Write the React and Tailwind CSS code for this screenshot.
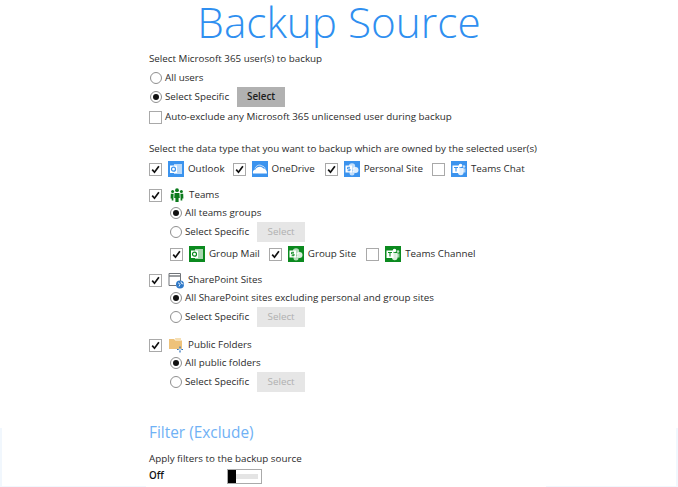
import React from "react";

const Check = ({ checked = true, className = "" }) => (
  <span className={`flex h-[13px] w-[13px] shrink-0 items-center justify-center border border-[#a9a9a9] bg-white ${className}`}>
    {checked && (
      <svg width="9" height="9" viewBox="0 0 9 9" fill="none">
        <path d="M1.2 4.6 3.5 7.2 7.9 1.2" stroke="#111" strokeWidth="1.7" />
      </svg>
    )}
  </span>
);

const Radio = ({ on = false }) => (
  <span className="flex h-3 w-3 shrink-0 items-center justify-center rounded-full border border-[#8f8f8f] bg-white">
    {on && <span className="h-[6px] w-[6px] rounded-full bg-[#111]" />}
  </span>
);

const SelectBtn = ({ active = false }) =>
  active ? (
    <button className="ml-2 flex h-5 w-12 items-center justify-center bg-[#b1b1b1] text-[9.8px] font-semibold text-[#1c1c1c]">Select</button>
  ) : (
    <button className="ml-2 flex h-5 w-12 items-center justify-center bg-[#e6e6e6] text-[9.8px] text-[#b0b0b0]">Select</button>
  );

// square tile with the white product drawing on it
const Tile = ({ color, kind }) => (
  <svg width="16" height="16" viewBox="0 0 16 16" className="shrink-0">
    <rect width="16" height="16" fill={color} />
    {kind === "outlook" && (
      <>
        <rect x="6" y="3" width="8" height="10" fill="#fff" opacity=".65" />
        <rect x="2" y="4.500" width="7" height="7.500" fill="#fff" />
        <circle cx="5.500" cy="8.200" r="2" fill="none" stroke={color} strokeWidth="1.2" />
      </>
    )}
    {kind === "cloud" && (
      <>
        <path d="M3 7.500c1-3 4.500-4.500 7-2.500 1.500.2 2.800 1.200 3.200 2.600" fill="none" stroke="#fff" strokeWidth="1" opacity=".7" />
        <path d="M1 12.500c-.5-2 .5-4 2.500-4 1-2.800 5.500-4 8-1 2 0 3.500 2 3.500 5z" fill="#fff" />
      </>
    )}
    {kind === "site" && (
      <>
        <circle cx="8" cy="5.500" r="3.200" fill="#fff" opacity=".7" />
        <circle cx="11.500" cy="9" r="3" fill="#fff" opacity=".85" />
        <circle cx="8" cy="12" r="2.500" fill="#fff" opacity=".7" />
        <rect x="1.500" y="4.500" width="6.500" height="7" fill="#fff" />
        <path d="M6 6.300H3.600v1.700H6v1.700H3.600" fill="none" stroke={color} strokeWidth="1" />
      </>
    )}
    {kind === "teams" && (
      <>
        <circle cx="9.500" cy="4.500" r="1.800" fill="#fff" />
        <circle cx="13" cy="5.500" r="1.300" fill="#fff" opacity=".75" />
        <path d="M7 7h5.500v4.500a2.700 2.700 0 0 1-5.500 0z" fill="#fff" opacity=".85" />
        <rect x="11.500" y="7.500" width="3" height="4" fill="#fff" opacity=".6" />
        <rect x="1.500" y="4.500" width="7" height="7.500" fill="#fff" />
        <path d="M3 6.500h4M5 6.500v4" stroke={color} strokeWidth="1.1" />
      </>
    )}
  </svg>
);

const TeamsPeople = () => (
  <svg width="14" height="14" viewBox="0 0 14 14" className="shrink-0" fill="#0b7a1c">
    <circle cx="7" cy="2.200" r="1.900" />
    <circle cx="2.600" cy="3.600" r="1.500" />
    <circle cx="11.400" cy="3.600" r="1.500" />
    <path d="M4.600 5h4.800l.4 5H8.600v4H5.400v-4H4.200z" />
    <path d="M.8 5.800h2.800l-.2 4.600v2H1.700v-2H.6zM10.400 5.800h2.800l.2 4.600h-1.100v2h-1.700v-2z" />
  </svg>
);

const SiteIcon = () => (
  <svg width="17" height="17" viewBox="0 0 17 17" className="shrink-0">
    <path d="M12.500 9V1.500H1v12h7" fill="none" stroke="#6f7378" strokeWidth="1" />
    <path d="M1 4h11.500" stroke="#6f7378" strokeWidth="1.400" />
    <circle cx="12" cy="12.500" r="4" fill="#2f79c8" />
    <path d="M10 11c1 0 1.500.5 2 1.500l-1 2M13 9.500l.5 2 2 .5" fill="none" stroke="#fff" strokeWidth=".9" />
  </svg>
);

const FolderIcon = () => (
  <svg width="17" height="16" viewBox="0 0 17 16" className="shrink-0">
    <path d="M1 2h5l1.500 1.500H14V12H1z" fill="#eec27a" />
    <path d="M7 1h6v2.500H7.500z" fill="#f6dfb4" />
    <path d="M12 9.500v6M9 12.500h6" stroke="#2d6fb8" strokeWidth="1.2" />
    <path d="M12 11v3M10.500 12.500h3" stroke="#fff" strokeWidth=".7" />
  </svg>
);

const Row = ({ className = "", children }) => (
  <div className={`flex items-center ${className}`}>{children}</div>
);

const RadioRow = ({ on, label, btn, active }) => (
  <Row className={`${btn ? "h-5" : "h-[18px]"} pl-[21px]`}>
    <Radio on={on} />
    <span className="ml-[3px]">{label}</span>
    {btn && <SelectBtn active={active} />}
  </Row>
);

const Item = ({ checked = true, color, kind, label, className = "" }) => (
  <div className={`flex items-center ${className}`}>
    <Check checked={checked} />
    <span className="ml-[6px] mr-[4px]"><Tile color={color} kind={kind} /></span>
    <span>{label}</span>
  </div>
);

export default function App() {
  return (
    <div className="relative h-[487px] w-[678px] overflow-hidden bg-white font-['Open_Sans',sans-serif] text-[9.8px] text-[#2b2b2b]">
      <h1 className="h-[50px] text-center text-[42.3px] font-light leading-[44px] text-[#2f8ff0]">Backup Source</h1>

      <div className="pl-[149px]">
        <Row className="h-[18px]">Select Microsoft 365 user(s) to backup</Row>
        <Row className="mt-[1px] h-[18px] pl-[1px]"><Radio /><span className="ml-[3px]">All users</span></Row>
        <Row className="h-5 pl-[1px]"><Radio on /><span className="ml-[3px]">Select Specific</span><SelectBtn active /></Row>
        <Row className="mt-[1px] h-[19px]"><Check checked={false} /><span className="ml-[3px]">Auto-exclude any Microsoft 365 unlicensed user during backup</span></Row>

        <Row className="mt-[13px] h-[18px]">Select the data type that you want to backup which are owned by the selected user(s)</Row>
        <Row className="mt-[1px] h-5">
          <Item color="#3b93ee" kind="outlook" label="Outlook" />
          <Item className="ml-2" color="#3b93ee" kind="cloud" label="OneDrive" />
          <Item className="ml-[10px]" color="#3b93ee" kind="site" label="Personal Site" />
          <Item className="ml-[9px]" checked={false} color="#3b93ee" kind="teams" label="Teams Chat" />
        </Row>

        <Row className="mt-[7px] h-[18px]">
          <Check /><span className="ml-[8px] mr-[5px]"><TeamsPeople /></span>Teams
        </Row>
        <RadioRow on label="All teams groups" />
        <RadioRow label="Select Specific" btn />
        <Row className="mt-[2px] h-5 pl-[21px]">
          <Item color="#0b8a1f" kind="outlook" label="Group Mail" />
          <Item className="ml-[9px]" color="#0b8a1f" kind="site" label="Group Site" />
          <Item className="ml-[10px]" checked={false} color="#0b8a1f" kind="teams" label="Teams Channel" />
        </Row>

        <Row className="mt-[7px] h-[18px]">
          <Check /><span className="ml-[6px] mr-[3px]"><SiteIcon /></span>SharePoint Sites
        </Row>
        <RadioRow on label="All SharePoint sites excluding personal and group sites" />
        <RadioRow label="Select Specific" btn />

        <Row className="mt-[9px] h-[18px]">
          <Check /><span className="ml-[6px] mr-[3px]"><FolderIcon /></span>Public Folders
        </Row>
        <RadioRow on label="All public folders" />
        <RadioRow label="Select Specific" btn />

        <h2 className="mt-[28px] h-[26px] text-[15.4px] leading-[26px] text-[#6fb1f5]">Filter (Exclude)</h2>
        <Row className="mt-[4px] h-[18px]">Apply filters to the backup source</Row>
        <Row className="h-4 font-semibold text-[#111]">
          <span className="w-[78px]">Off</span>
          <span className="flex h-[15px] w-[35px] border border-[#aaaaaa] bg-white">
            <span className="h-full w-[8px] bg-black" />
            <span className="my-[4px] mr-[3px] flex-1 bg-[#e4e4e4]" />
          </span>
        </Row>
      </div>

      {/* faint frame of the window behind, only visible round the bottom corners */}
      <div className="absolute bottom-0 left-0 h-[59px] w-[2px] bg-[#f1f7fd]" />
      <div className="absolute bottom-0 right-0 h-[59px] w-[2px] bg-[#f1f7fd]" />
      <div className="absolute bottom-0 left-0 h-[1px] w-[146px] bg-[#f1f7fd]" />
      <div className="absolute bottom-0 right-0 h-[1px] w-[132px] bg-[#f1f7fd]" />
    </div>
  );
}
